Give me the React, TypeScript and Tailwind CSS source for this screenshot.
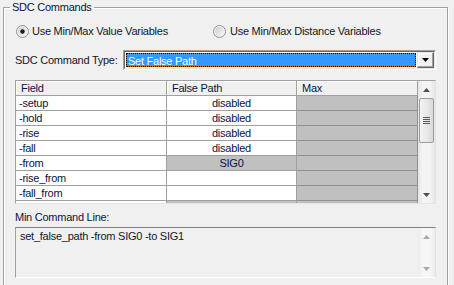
import React from 'react';

type Row = { field: string; fp: string; fpGray?: boolean };

const rows: Row[] = [
  { field: '-setup', fp: 'disabled' },
  { field: '-hold', fp: 'disabled' },
  { field: '-rise', fp: 'disabled' },
  { field: '-fall', fp: 'disabled' },
  { field: '-from', fp: 'SIG0', fpGray: true },
  { field: '-rise_from', fp: '' },
  { field: '-fall_from', fp: '' },
  { field: '', fp: '', fpGray: true },
];

const Radio = ({ checked }: { checked?: boolean }) => (
  <svg width="13" height="13" viewBox="0 0 13 13" className="shrink-0">
    <defs>
      <linearGradient id="rg" x1="0" y1="0" x2="1" y2="1">
        <stop offset="0" stopColor="#cfcfcf" />
        <stop offset="1" stopColor="#f8f8f8" />
      </linearGradient>
    </defs>
    <circle cx="6.5" cy="6.5" r="6" fill="#f4f4f4" stroke="#8e8f8f" />
    <circle cx="6.5" cy="6.5" r="4.5" fill="url(#rg)" />
    {checked && <circle cx="6.5" cy="6.5" r="2.2" fill="#1a1a1a" />}
  </svg>
);

const Arrow = ({ up, color = '#4d4d4d' }: { up?: boolean; color?: string }) => (
  <svg width="7" height="4" viewBox="0 0 7 4">
    <path d={up ? 'M0 4 L3.5 0 L7 4 Z' : 'M0 0 L7 0 L3.5 4 Z'} fill={color} />
  </svg>
);

export default function App() {
  return (
    <div className="w-[454px] h-[285px] overflow-hidden bg-[#f0f0f0] text-[11px] leading-[13px] tracking-[-0.25px] text-[#101828] font-['Liberation_Sans',Arial,sans-serif]">
      <fieldset className="ml-[3px] w-[445px] h-[300px] border border-[#a0a0a0] shadow-[inset_1px_1px_0_#fff,1px_1px_0_#fff]">
        <legend className="ml-[6px] px-[2px] leading-[14px] text-[#0a1440]">SDC Commands</legend>

        <div className="pt-[11px] flex items-center h-[24px]">
          <div className="ml-[12px] w-[197px] flex items-center gap-[3px] whitespace-nowrap">
            <Radio checked />
            <span>Use Min/Max Value Variables</span>
          </div>
          <div className="flex items-center gap-[4px] whitespace-nowrap">
            <Radio />
            <span>Use Min/Max Distance Variables</span>
          </div>
        </div>

        <div className="mt-[12px] flex items-center h-[20px]">
          <span className="ml-[11px] w-[108px] whitespace-nowrap">SDC Command Type:</span>
          <div className="w-[313px] h-[20px] flex border border-t-[#a0a0a0] border-l-[#a0a0a0] border-r-white border-b-white">
            <div className="flex-1 flex border border-t-[#696969] border-l-[#696969] border-r-[#e3e3e3] border-b-[#e3e3e3] bg-white">
              <div className="flex-1 m-[1px] bg-[#cc6600] flex">
                <div className="flex-1 border border-dotted border-black bg-[#3399ff] bg-clip-padding text-white pl-[1px] leading-[14px]">
                  Set False Path
                </div>
              </div>
              <div className="w-[17px] flex items-center justify-center bg-[#f0f0f0] border border-t-[#e3e3e3] border-l-[#e3e3e3] border-r-[#696969] border-b-[#696969] shadow-[inset_-1px_-1px_0_#a0a0a0,inset_1px_1px_0_#fff]">
                <Arrow color="#000" />
              </div>
            </div>
          </div>
        </div>

        <div className="mt-[10px] ml-[11px] w-[421px] h-[124px] flex border border-t-[#a0a0a0] border-l-[#a0a0a0] border-r-[#e3e3e3] border-b-[#e3e3e3] bg-white">
          <div className="flex-1 overflow-hidden">
            <div className="flex h-[15px]">
              {[
                { label: 'Field', w: 'w-[151px]' },
                { label: 'False Path', w: 'w-[130px]' },
                { label: 'Max', w: 'w-[121px]' },
              ].map((h) => (
                <div
                  key={h.label}
                  className={`${h.w} shrink-0 pl-[5px] leading-[14px] bg-[#f0f0f0] border-r border-b border-[#a0a0a0] shadow-[inset_1px_1px_0_#fff] text-[#0a1440]`}
                >
                  {h.label}
                </div>
              ))}
            </div>
            {rows.map((r, i) => (
              <div key={i} className="flex h-[15px]">
                <div className="w-[151px] shrink-0 pl-[3px] leading-[14px] bg-white border-r border-b border-[#a0a0a0] text-[#0a1440]">
                  {r.field}
                </div>
                <div
                  className={`w-[130px] shrink-0 text-center leading-[14px] border-r border-b border-[#a0a0a0] text-[#0a1440] ${
                    r.fpGray ? 'bg-[#c0c0c0]' : 'bg-white'
                  }`}
                >
                  {r.fp}
                </div>
                <div className="w-[121px] shrink-0 bg-[#c0c0c0] border-r border-b border-[#909090]" />
              </div>
            ))}
          </div>
          <div className="w-[17px] flex flex-col bg-[linear-gradient(to_right,#e6e6e6,#f4f4f4_30%,#f4f4f4_70%,#e6e6e6)]">
            <div className="h-[17px] flex items-center justify-center">
              <Arrow up />
            </div>
            <div className="mx-[1px] h-[45px] rounded-[2px] border border-[#9b9b9b] bg-[linear-gradient(to_right,#f3f3f3,#e9e9e9_50%,#d8d8d8)] flex flex-col items-center justify-center gap-[1px]">
              <div className="w-[7px] h-[1px] bg-[#5a5a5a]" />
              <div className="w-[7px] h-[1px] bg-[#5a5a5a]" />
              <div className="w-[7px] h-[1px] bg-[#5a5a5a]" />
              <div className="w-[7px] h-[1px] bg-[#5a5a5a]" />
            </div>
            <div className="flex-1" />
            <div className="h-[17px] flex items-center justify-center">
              <Arrow />
            </div>
          </div>
        </div>

        <div className="mt-[7px] ml-[11px] whitespace-nowrap text-[#0a1440]">Min Command Line:</div>

        <div className="mt-[3px] ml-[11px] w-[421px] h-[51px] flex border border-t-[#808080] border-l-[#a0a0a0] border-r-[#e3e3e3] border-b-[#fff] bg-[#f0f0f0]">
          <div className="flex-1 pl-[4px] pt-[2px] whitespace-nowrap">set_false_path -from SIG0 -to SIG1</div>
          <div className="w-[17px] flex flex-col justify-between bg-[linear-gradient(to_right,#ececec,#f6f6f6_30%,#f6f6f6_70%,#ececec)]">
            <div className="h-[17px] flex items-center justify-center">
              <Arrow up color="#a8a8a8" />
            </div>
            <div className="h-[17px] flex items-center justify-center">
              <Arrow color="#a8a8a8" />
            </div>
          </div>
        </div>
      </fieldset>
    </div>
  );
}
